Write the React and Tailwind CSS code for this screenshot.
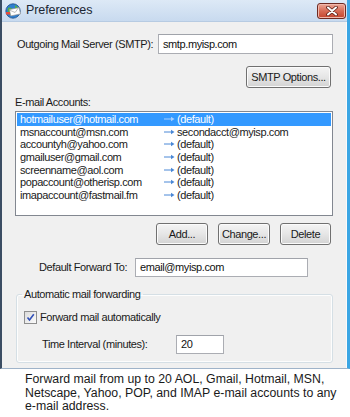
import React from 'react';

const accounts = [
  ['hotmailuser@hotmail.com', '(default)'],
  ['msnaccount@msn.com', 'secondacct@myisp.com'],
  ['accountyh@yahoo.com', '(default)'],
  ['gmailuser@gmail.com', '(default)'],
  ['screenname@aol.com', '(default)'],
  ['popaccount@otherisp.com', '(default)'],
  ['imapaccount@fastmail.fm', '(default)'],
];

const ui = { fontFamily: '"Liberation Sans", Arial, sans-serif' };

const Button = ({ children, className = '' }) => (
  <button
    className={`h-[22px] rounded-[3px] border border-[#707070] bg-gradient-to-b from-[#f4f4f4] via-[#e6e6e6] to-[#d3d3d3] text-[11px] tracking-[-0.4px] text-[#1a1a1a] shadow-[inset_0_0_0_1px_#fbfbfb] ${className}`}
  >
    {children}
  </button>
);

const Arrow = ({ light }) => (
  <svg width="11" height="6" viewBox="0 0 11 6" className="mr-[2px]">
    <path d="M0 3H9" stroke={light ? '#a9d0ff' : '#4a88d6'} strokeWidth="1" />
    <path d="M7 0.8L10.5 3L7 5.2Z" fill={light ? '#a9d0ff' : '#4a88d6'} />
  </svg>
);

const AppIcon = () => (
  <svg width="17" height="16" viewBox="0 0 17 16">
    <circle cx="8" cy="8" r="7.2" fill="#2f7fcf" stroke="#1d4f8a" strokeWidth="0.8" />
    <path d="M3 5c2-1 4 0 5 2s-1 4-3 5c-1-2-3-3-2-7z" fill="#4fb04a" />
    <path d="M10 2c2 1 4 3 4 6-2 0-3-2-4-3z" fill="#4fb04a" />
    <rect x="5" y="5.5" width="10" height="6.5" fill="#ffffff" stroke="#8a8a8a" strokeWidth="0.6" transform="rotate(-12 10 9)" />
    <path d="M5.3 6.2L10 9.5L14.7 5.2" fill="none" stroke="#9a9a9a" strokeWidth="0.6" transform="rotate(-12 10 9)" />
    <rect x="1" y="9" width="4" height="2.5" fill="#e84b3c" />
  </svg>
);

const CloseButton = () => (
  <div className="flex h-[16px] w-[29px] items-center justify-center rounded-[3px] border border-[#6e2a22] bg-gradient-to-b from-[#eba99a] via-[#d66a55] to-[#c4442d] shadow-[inset_0_0_0_1px_#f0b8ac]">
    <svg width="12" height="10" viewBox="0 0 12 10">
      <path d="M2 1.5L10 8.5M10 1.5L2 8.5" stroke="#5a1e16" strokeWidth="3.6" strokeLinecap="round" />
      <path d="M2 1.5L10 8.5M10 1.5L2 8.5" stroke="#ffffff" strokeWidth="2" strokeLinecap="round" />
    </svg>
  </div>
);

const Input = ({ value, className = '' }) => (
  <div
    className={`flex items-center border border-[#abadb3] border-t-[#a0a3aa] bg-white pl-[4px] text-[11px] tracking-[-0.4px] text-[#111] ${className}`}
  >
    {value}
  </div>
);

export default function App() {
  return (
    <div className="h-[417px] w-[350px] overflow-hidden bg-white" style={ui}>
      {/* Window */}
      <div className="flex h-[369px] flex-col border-l-2 border-r-[3px] border-b border-l-[#3b4d63] border-r-[#3ba6e4] border-b-[#9fb3c9]">
        {/* Title bar */}
        <div className="flex h-[22px] items-center border-b border-[#b7cbe2] bg-gradient-to-b from-[#dde9f6] to-[#c8daef] pl-[3px] pr-[1px]">
          <AppIcon />
          <span className="ml-[4px] text-[12.5px] tracking-[-0.1px] text-[#1b2633]">Preferences</span>
          <div className="ml-auto mt-[1px]">
            <CloseButton />
          </div>
        </div>

        {/* Content */}
        <div className="flex flex-1 flex-col border-r border-[#fbfbfb] bg-[#f0f0f0] px-[13px] text-[11px] tracking-[-0.4px] text-[#1a1a1a]">
          <div className="mt-[12px] flex h-[20px] items-center">
            <span className="ml-[2px]">Outgoing Mail Server (SMTP):</span>
            <Input value="smtp.myisp.com" className="ml-auto h-[20px] w-[175px]" />
          </div>

          <div className="mt-[12px] flex justify-end pr-[2px]">
            <Button className="w-[85px]">SMTP Options...</Button>
          </div>

          <div className="mt-[8px] leading-[13px]">E-mail Accounts:</div>

          <div className="mt-[2px] h-[105px] border border-[#828790] bg-white p-[1px]">
            {accounts.map(([a, b], i) => (
              <div
                key={a}
                className={`flex h-[12.6px] items-center leading-[12px] ${
                  i === 0 ? 'bg-[#3399ff] text-white' : 'text-[#1a1a1a]'
                }`}
              >
                <span className="ml-[3px] w-[144px]">{a}</span>
                <Arrow light={i === 0} />
                <span>{b}</span>
              </div>
            ))}
          </div>

          <div className="mt-[7px] flex justify-end gap-[10px] pr-[2px]">
            <Button className="w-[52px]">Add...</Button>
            <Button className="w-[52px]">Change...</Button>
            <Button className="w-[51px]">Delete</Button>
          </div>

          <div className="mt-[13px] flex h-[19px] items-center">
            <span className="ml-[24px] w-[96px]">Default Forward To:</span>
            <Input value="email@myisp.com" className="h-[19px] w-[173px]" />
          </div>

          <fieldset className="ml-[1px] mt-[11px] h-[75px] rounded-[3px] border border-[#d5dfe5] shadow-[inset_0_0_0_1px_#fdfdfd]">
            <legend className="ml-[5px] px-[2px] leading-[13px]">Automatic mail forwarding</legend>
            <div className="ml-[7px] mt-[8px] flex items-center">
              <div className="flex h-[13px] w-[13px] items-center justify-center border border-[#8f8f8f] bg-gradient-to-br from-[#dcdcdc] to-[#fbfbfb]">
                <svg width="9" height="9" viewBox="0 0 9 9">
                  <path d="M1.5 4.5L3.5 7L7.8 1.2" fill="none" stroke="#3150b8" strokeWidth="1.6" />
                </svg>
              </div>
              <span className="ml-[3px]">Forward mail automatically</span>
            </div>
            <div className="mt-[9px] flex items-center">
              <span className="ml-[25px] w-[134px]">Time Interval (minutes):</span>
              <Input value="20" className="h-[19px] w-[48px]" />
            </div>
          </fieldset>
        </div>
      </div>

      {/* Caption */}
      <p className="ml-[25px] mt-[4px] w-[318px] text-[12.3px] leading-[13.5px] text-[#1a1a1a]">
        Forward mail from up to 20 AOL, Gmail, Hotmail, MSN, Netscape, Yahoo, POP, and IMAP e-mail accounts to any
        e-mail address.
      </p>
    </div>
  );
}
